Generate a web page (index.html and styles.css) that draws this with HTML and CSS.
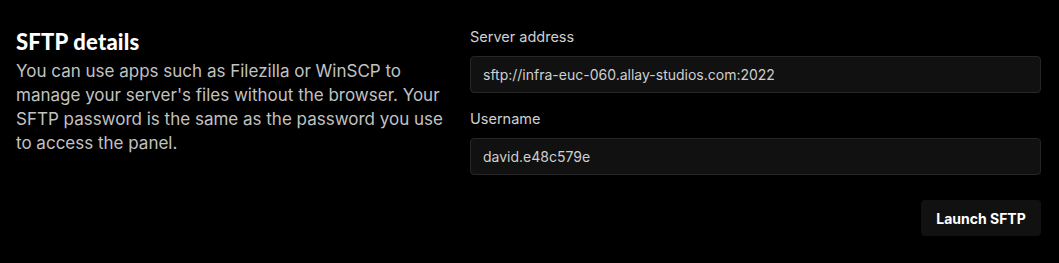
FILE: index.html
```html
<!DOCTYPE html>
<html lang="en">
<head>
<meta charset="utf-8">
<title>SFTP details</title>
<link rel="stylesheet" href="styles.css">
</head>
<body>
<section class="sftp">
  <div class="intro">
    <h2 class="title">SFTP details</h2>
    <p class="desc">You can use apps such as Filezilla or WinSCP to manage your server's files without the browser. Your SFTP password is the same as the password you use to access the panel.</p>
  </div>
  <div class="fields">
    <div class="field">
      <label class="label">Server address</label>
      <div class="input">sftp://infra-euc-060.allay-studios.com:2022</div>
    </div>
    <div class="field">
      <label class="label">Username</label>
      <div class="input">david.e48c579e</div>
    </div>
    <div class="actions">
      <button class="btn">Launch SFTP</button>
    </div>
  </div>
</section>
</body>
</html>
```
FILE: styles.css
```css
html, body {
  margin: 0;
  padding: 0;
  background: #000;
}
body {
  font-family: Inter, "Noto Sans", sans-serif;
  color: #c4c4c4;
}
.sftp {
  display: flex;
  gap: 24px;
  padding: 25px 18px 0 16px;
}
.intro {
  width: 430px;
  flex: none;
}
.title {
  margin: 0;
  font-family: Lato, Inter, sans-serif;
  font-weight: 900;
  font-size: 22px;
  line-height: 34px;
  color: #fff;
  letter-spacing: 0.2px;
}
.desc {
  margin: 0;
  font-size: 17px;
  line-height: 24px;
  color: #c2c2c2;
}
.fields {
  flex: 1;
  display: flex;
  flex-direction: column;
}
.field {
  display: flex;
  flex-direction: column;
  margin-bottom: 14px;
}
.label {
  font-size: 14.5px;
  line-height: 24px;
  color: #d0d0d0;
  margin-bottom: 7px;
}
.input {
  height: 37px;
  box-sizing: border-box;
  border: 1px solid #262626;
  border-radius: 4px;
  background: #111;
  padding: 0 12px;
  display: flex;
  align-items: center;
  font-size: 14px;
  color: #cfcfcf;
}
.actions {
  display: flex;
  justify-content: flex-end;
  margin-top: 11px;
}
.btn {
  width: 120px;
  height: 36px;
  border: none;
  border-radius: 4px;
  background: #111;
  color: #fff;
  font-family: Inter, sans-serif;
  font-weight: 700;
  font-size: 14px;
}
```
